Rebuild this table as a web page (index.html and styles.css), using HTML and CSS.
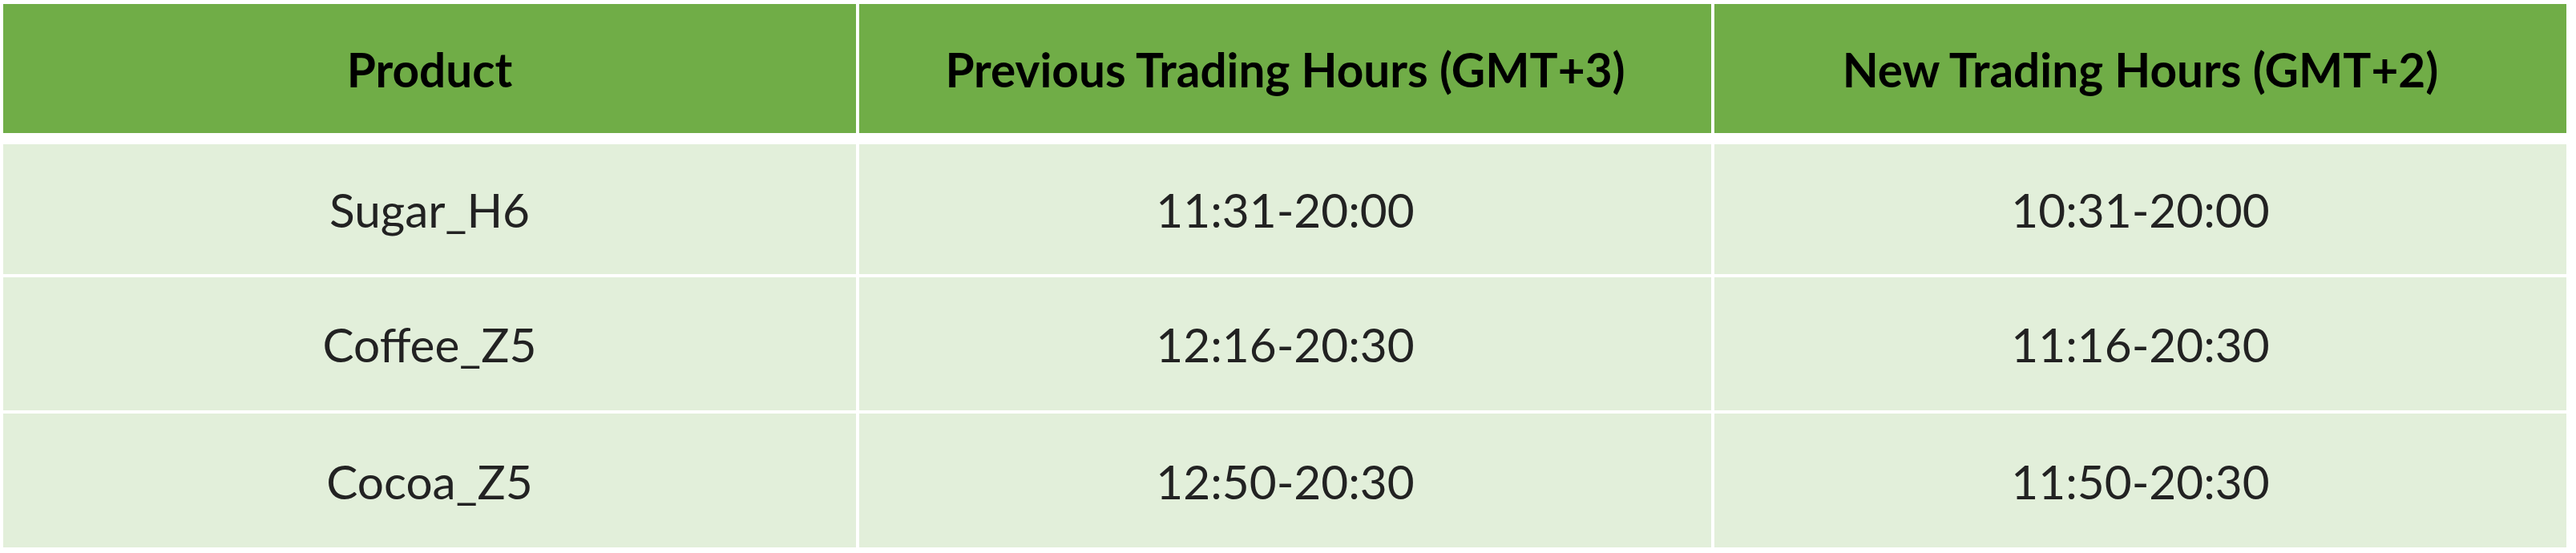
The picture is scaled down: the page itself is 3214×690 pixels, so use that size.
FILE: index.html
```html
<!DOCTYPE html>
<html lang="en">
<head>
<meta charset="utf-8">
<title>Trading Hours</title>
<link rel="stylesheet" href="styles.css">
</head>
<body>
<div class="sheet">
  <div class="head-row">
    <div class="cell head">Product</div>
    <div class="cell head">Previous Trading Hours (GMT+3)</div>
    <div class="cell head">New Trading Hours (GMT+2)</div>
  </div>
  <div class="body-rows">
    <div class="cell">Sugar_H6</div>
    <div class="cell">11:31-20:00</div>
    <div class="cell">10:31-20:00</div>
    <div class="cell">Coffee_Z5</div>
    <div class="cell">12:16-20:30</div>
    <div class="cell">11:16-20:30</div>
    <div class="cell">Cocoa_Z5</div>
    <div class="cell">12:50-20:30</div>
    <div class="cell">11:50-20:30</div>
  </div>
</div>
</body>
</html>
```
FILE: styles.css
```css
html, body {
  margin: 0;
  padding: 0;
  background: #ffffff;
}

.sheet {
  width: 3198px;
  margin: 5px 0 0 4px;
  font-family: "Lato", "Open Sans", sans-serif;
}

.head-row,
.body-rows {
  display: grid;
  grid-template-columns: 1064px 1063px 1063px;
  column-gap: 4px;
}

.head-row {
  grid-template-rows: 161px;
}

.body-rows {
  margin-top: 14px;
  grid-template-rows: 162px 166px 167px;
  row-gap: 4px;
}

.cell {
  display: flex;
  align-items: center;
  justify-content: center;
  background: #e2efda;
  color: #222222;
  font-size: 58.5px;
  white-space: nowrap;
}

.cell.head {
  background: #70ad47;
  color: #000000;
  font-weight: 700;
}
```
